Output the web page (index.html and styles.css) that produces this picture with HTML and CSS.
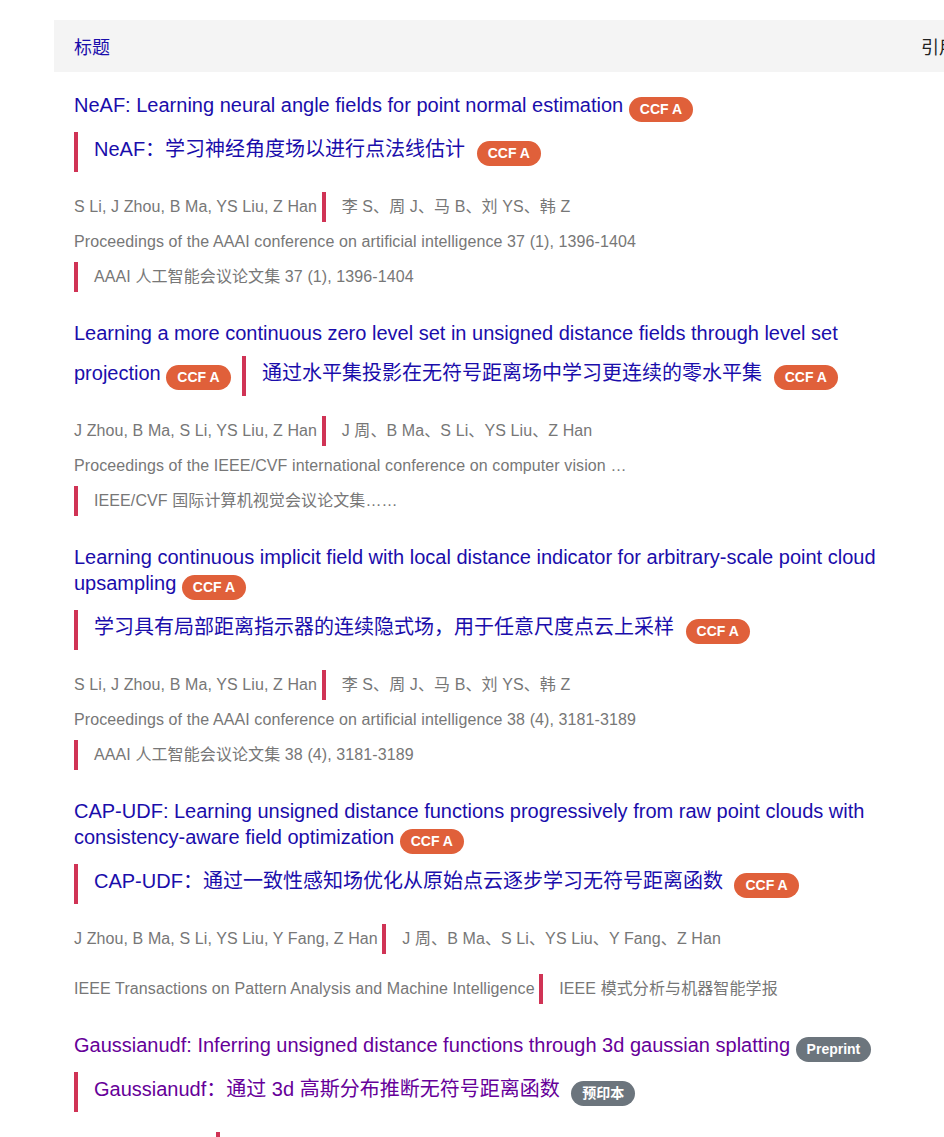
FILE: index.html
```html
<!DOCTYPE html>
<html lang="zh-CN">
<head>
<meta charset="utf-8">
<title>标题</title>
<link rel="stylesheet" href="styles.css">
</head>
<body>
<div class="page">
  <table class="pubs">
    <colgroup>
      <col class="c-title">
      <col class="c-cite">
      <col class="c-year">
    </colgroup>
    <thead>
      <tr>
        <th class="th-title"><a href="#">标题</a></th>
        <th class="th-cite">引用</th>
        <th class="th-year">年份</th>
      </tr>
    </thead>
    <tbody>
      <tr>
        <td class="cell-title">
          <div class="title-line"><a class="title" href="#">NeAF: Learning neural angle fields for point normal estimation</a> <span class="badge ccf">CCF A</span> <span class="tr tr-title"><a class="title" href="#">NeAF：学习神经角度场以进行点法线估计</a> <span class="badge ccf">CCF A</span></span></div>
          <div class="meta">S Li, J Zhou, B Ma, YS Liu, Z Han <span class="tr">李 S、周 J、马 B、刘 YS、韩 Z</span></div>
          <div class="meta">Proceedings of the AAAI conference on artificial intelligence 37 (1), 1396-1404 <span class="tr">AAAI 人工智能会议论文集 37 (1), 1396-1404</span></div>
        </td>
        <td class="cell-cite"></td>
        <td class="cell-year"></td>
      </tr>
      <tr>
        <td class="cell-title">
          <div class="title-line"><a class="title" href="#">Learning a more continuous zero level set in unsigned distance fields through level set projection</a> <span class="badge ccf">CCF A</span> <span class="tr tr-title"><a class="title" href="#">通过水平集投影在无符号距离场中学习更连续的零水平集</a> <span class="badge ccf">CCF A</span></span></div>
          <div class="meta">J Zhou, B Ma, S Li, YS Liu, Z Han <span class="tr">J 周、B Ma、S Li、YS Liu、Z Han</span></div>
          <div class="meta">Proceedings of the IEEE/CVF international conference on computer vision … <span class="tr">IEEE/CVF 国际计算机视觉会议论文集……</span></div>
        </td>
        <td class="cell-cite"></td>
        <td class="cell-year"></td>
      </tr>
      <tr>
        <td class="cell-title">
          <div class="title-line"><a class="title" href="#">Learning continuous implicit field with local distance indicator for arbitrary-scale point cloud upsampling</a> <span class="badge ccf">CCF A</span> <span class="tr tr-title"><a class="title" href="#">学习具有局部距离指示器的连续隐式场，用于任意尺度点云上采样</a> <span class="badge ccf">CCF A</span></span></div>
          <div class="meta">S Li, J Zhou, B Ma, YS Liu, Z Han <span class="tr">李 S、周 J、马 B、刘 YS、韩 Z</span></div>
          <div class="meta">Proceedings of the AAAI conference on artificial intelligence 38 (4), 3181-3189 <span class="tr">AAAI 人工智能会议论文集 38 (4), 3181-3189</span></div>
        </td>
        <td class="cell-cite"></td>
        <td class="cell-year"></td>
      </tr>
      <tr>
        <td class="cell-title">
          <div class="title-line"><a class="title" href="#">CAP-UDF: Learning unsigned distance functions progressively from raw point clouds with consistency-aware field optimization</a> <span class="badge ccf">CCF A</span> <span class="tr tr-title"><a class="title" href="#">CAP-UDF：通过一致性感知场优化从原始点云逐步学习无符号距离函数</a> <span class="badge ccf">CCF A</span></span></div>
          <div class="meta">J Zhou, B Ma, S Li, YS Liu, Y Fang, Z Han <span class="tr">J 周、B Ma、S Li、YS Liu、Y Fang、Z Han</span></div>
          <div class="meta">IEEE Transactions on Pattern Analysis and Machine Intelligence <span class="tr">IEEE 模式分析与机器智能学报</span></div>
        </td>
        <td class="cell-cite"></td>
        <td class="cell-year"></td>
      </tr>
      <tr>
        <td class="cell-title">
          <div class="title-line"><a class="title visited" href="#">Gaussianudf: Inferring unsigned distance functions through 3d gaussian splatting</a> <span class="badge pre">Preprint</span> <span class="tr tr-title"><a class="title visited" href="#">Gaussianudf：通过 3d 高斯分布推断无符号距离函数</a> <span class="badge pre">预印本</span></span></div>
          <div class="meta">S Li, YS Liu, Z Han <span class="tr">李 S、刘 YS、韩 Z</span></div>
          <div class="meta">arXiv preprint arXiv:2503.19458 <span class="tr">arXiv 预印本 arXiv:2503.19458</span></div>
        </td>
        <td class="cell-cite"></td>
        <td class="cell-year"></td>
      </tr>
    </tbody>
  </table>
</div>
</body>
</html>
```

FILE: styles.css
```css
html, body {
  margin: 0;
  padding: 0;
  background: #fff;
}

body {
  font-family: "Liberation Sans", Arial, "Noto Sans CJK SC", sans-serif;
  color: #222;
}

.page {
  width: 944px;
  overflow: hidden;
  padding: 20px 0 0 54px;
  box-sizing: border-box;
}

.pubs {
  border-collapse: collapse;
  table-layout: fixed;
  width: 1047px;
}

.c-title { width: 847px; }
.c-cite { width: 100px; }
.c-year { width: 100px; }

.pubs thead tr {
  background: #f4f4f4;
}

.pubs th {
  height: 52px;
  padding: 0 20px;
  font-size: 18px;
  font-weight: normal;
  text-align: left;
  vertical-align: middle;
  color: #222;
}

.th-title a {
  color: #1a0dab;
  text-decoration: none;
}

.cell-title {
  padding: 20px 20px 0 20px;
  vertical-align: top;
}

.pubs tbody tr + tr .cell-title {
  padding-top: 18px;
}

.title-line {
  font-size: 20px;
  line-height: 26px;
}

.title {
  color: #1a0dab;
  text-decoration: none;
}

.title.visited {
  color: #660099;
}

.title-line > .badge {
  margin-right: 6px;
}

.tr {
  display: inline-block;
  border-left: 4px solid #d03355;
  padding: 5px 0 5px 16px;
  margin: 10px 0;
}

.tr-title {
  line-height: 25px;
  padding-top: 5px;
  padding-bottom: 6px;
}

.tr .badge {
  margin-left: 6px;
}

.badge {
  display: inline-block;
  vertical-align: -2px;
  font-size: 14px;
  font-weight: bold;
  line-height: 25px;
  padding: 0 11px;
  border-radius: 13px;
  color: #fff;
  letter-spacing: 0;
  white-space: nowrap;
}

.badge.ccf {
  background: #e0603a;
}

.badge.pre {
  background: #6c757d;
}

.meta {
  font-size: 16px;
  line-height: 20px;
  letter-spacing: 0.1px;
  color: #777;
}
```
